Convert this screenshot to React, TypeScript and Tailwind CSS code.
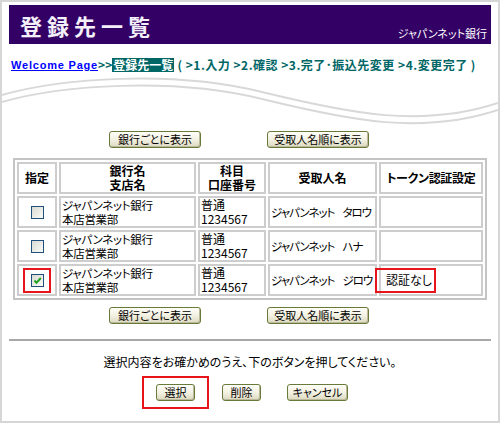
import type { ReactNode } from "react";

const teal = "text-[#006666]";

function Btn({ children, className }: { children: ReactNode; className: string }) {
  return (
    <button
      className={
        "h-[17px] rounded-[3px] border border-[#687a3a] bg-gradient-to-b from-[#fffef8] via-[#f3f1e2] to-[#dcd9c0] text-[11px] leading-none text-black shadow-[inset_-1px_-1px_0_#bdb99c] " +
        className
      }
    >
      {children}
    </button>
  );
}

function Check({ checked = false }: { checked?: boolean }) {
  return (
    <span className="flex h-[13px] w-[13px] items-center justify-center border border-[#1f4f7c] bg-gradient-to-br from-[#d9d9d2] to-[#fbfbf9]">
      {checked && (
        <svg width="9" height="9" viewBox="0 0 9 9">
          <path d="M1.5 4.5 L3.5 6.8 L7.8 2" fill="none" stroke="#21a121" strokeWidth="2" />
        </svg>
      )}
    </span>
  );
}

const rows = [
  { name: "タロウ", checked: false, token: "" },
  { name: "ハナ", checked: false, token: "" },
  { name: "ジロウ", checked: true, token: "認証なし" },
];

function SortButtons() {
  return (
    <div className="flex gap-[66px] pl-[100px]">
      <Btn className="w-[92px]">銀行ごとに表示</Btn>
      <Btn className="w-[102px]">受取人名順に表示</Btn>
    </div>
  );
}

export default function App() {
  return (
    <div className="h-[423px] w-[500px] overflow-hidden border-2 border-[#d6d6d6] bg-white px-[7px] pt-[3px] font-['Noto_Sans_CJK_JP',sans-serif] text-black [font-feature-settings:'palt']">
      {/* title bar */}
      <div className="flex h-[39px] items-center justify-between bg-[#330066] pl-[11px] pr-[4px]">
        <h1 className="text-[22px] font-bold leading-none tracking-[5px] text-[#f4f0fa]">登録先一覧</h1>
        <span className="mt-[17px] text-[11px] leading-none text-white">ジャパンネット銀行</span>
      </div>

      {/* breadcrumb */}
      <div className="mt-[14px] flex h-[14px] items-center whitespace-nowrap text-[12px] font-bold leading-[14px]">
        <a className="ml-[2px] font-['Liberation_Sans',sans-serif] text-[11px] tracking-[0.8px] text-[#0000ff] underline">
          Welcome Page
        </a>
        <span className={teal}>&gt;&gt;</span>
        <span className="bg-[#006666] px-[1px] text-white">登録先一覧</span>
        <span className={teal + " tracking-[0.5px]"}>&nbsp;( &gt;1.入力 &gt;2.確認 &gt;3.完了･振込先変更 &gt;4.変更完了 )</span>
      </div>

      {/* decorative wave */}
      <svg className="-mx-[7px] block h-[56px] w-[496px]" viewBox="0 0 496 56">
        <g fill="none" stroke="#d8d8d8" strokeWidth="2">
          <path d="M0 23 C 60 6, 170 -2, 260 20 S 420 56, 496 31" />
          <path d="M0 30 C 60 13, 170 5, 260 27 S 420 63, 496 38" />
        </g>
      </svg>

      <div className="mt-[3px]">
        <SortButtons />
      </div>

      <table className="ml-[4px] mt-[10px] w-[474px] table-fixed border-separate border-2 border-[#c4c4c4] text-[12px] leading-[14px] [border-spacing:2px]">
        <thead>
          <tr className="h-[32px]">
            <th className="w-[40px] border-2 border-[#cdcdcd] p-0 font-bold">指定</th>
            <th className="w-[137px] border-2 border-[#cdcdcd] p-0 font-bold">
              銀行名
              <br />
              支店名
            </th>
            <th className="w-[68px] border-2 border-[#cdcdcd] p-0 font-bold">
              科目
              <br />
              口座番号
            </th>
            <th className="w-[109px] border-2 border-[#cdcdcd] p-0 font-bold">受取人名</th>
            <th className="border-2 border-[#cdcdcd] p-0 font-bold [letter-spacing:-0.3px]">トークン認証設定</th>
          </tr>
        </thead>
        <tbody>
          {rows.map((r) => (
            <tr key={r.name} className="h-[32px]">
              <td className="border-2 border-[#cdcdcd] p-0">
                <div className="flex items-center justify-center">
                  {r.checked ? (
                    <div className="flex h-[25px] w-[28px] items-center justify-center border-2 border-[#e8141c]">
                      <Check checked />
                    </div>
                  ) : (
                    <Check />
                  )}
                </div>
              </td>
              <td className="border-2 border-[#cdcdcd] p-0 pl-[1px] text-[11.5px] [letter-spacing:-0.3px]">
                ジャパンネット銀行
                <br />
                本店営業部
              </td>
              <td className="border-2 border-[#cdcdcd] p-0 pl-[1px]">
                普通
                <br />
                1234567
              </td>
              <td className="whitespace-nowrap border-2 border-[#cdcdcd] p-0 pl-[1px] text-[11.5px] [letter-spacing:-1px]">
                ジャパンネット<span className="ml-[8px]">{r.name}</span>
              </td>
              <td className="border-2 border-[#cdcdcd] p-0">
                {r.token && (
                  <div className="-ml-[6px] flex h-[25px] w-[61px] items-center border-2 border-[#e8141c] pl-[9px]">
                    {r.token}
                  </div>
                )}
              </td>
            </tr>
          ))}
        </tbody>
      </table>

      <div className="mt-[7px]">
        <SortButtons />
      </div>

      <div className="mt-[15px] border-t-2 border-[#a8a8a8]" />

      <p className="mt-[14px] text-center text-[12px] leading-[14px]">
        選択内容をお確かめのうえ、下のボタンを押してください。
      </p>

      <div className="mt-[7px] flex items-center pl-[133px]">
        <div className="flex h-[33px] w-[67px] items-center justify-center border-2 border-[#e8141c]">
          <Btn className="w-[39px]">選択</Btn>
        </div>
        <Btn className="ml-[13px] w-[39px]">削除</Btn>
        <Btn className="ml-[26px] w-[61px]">キャンセル</Btn>
      </div>
    </div>
  );
}
